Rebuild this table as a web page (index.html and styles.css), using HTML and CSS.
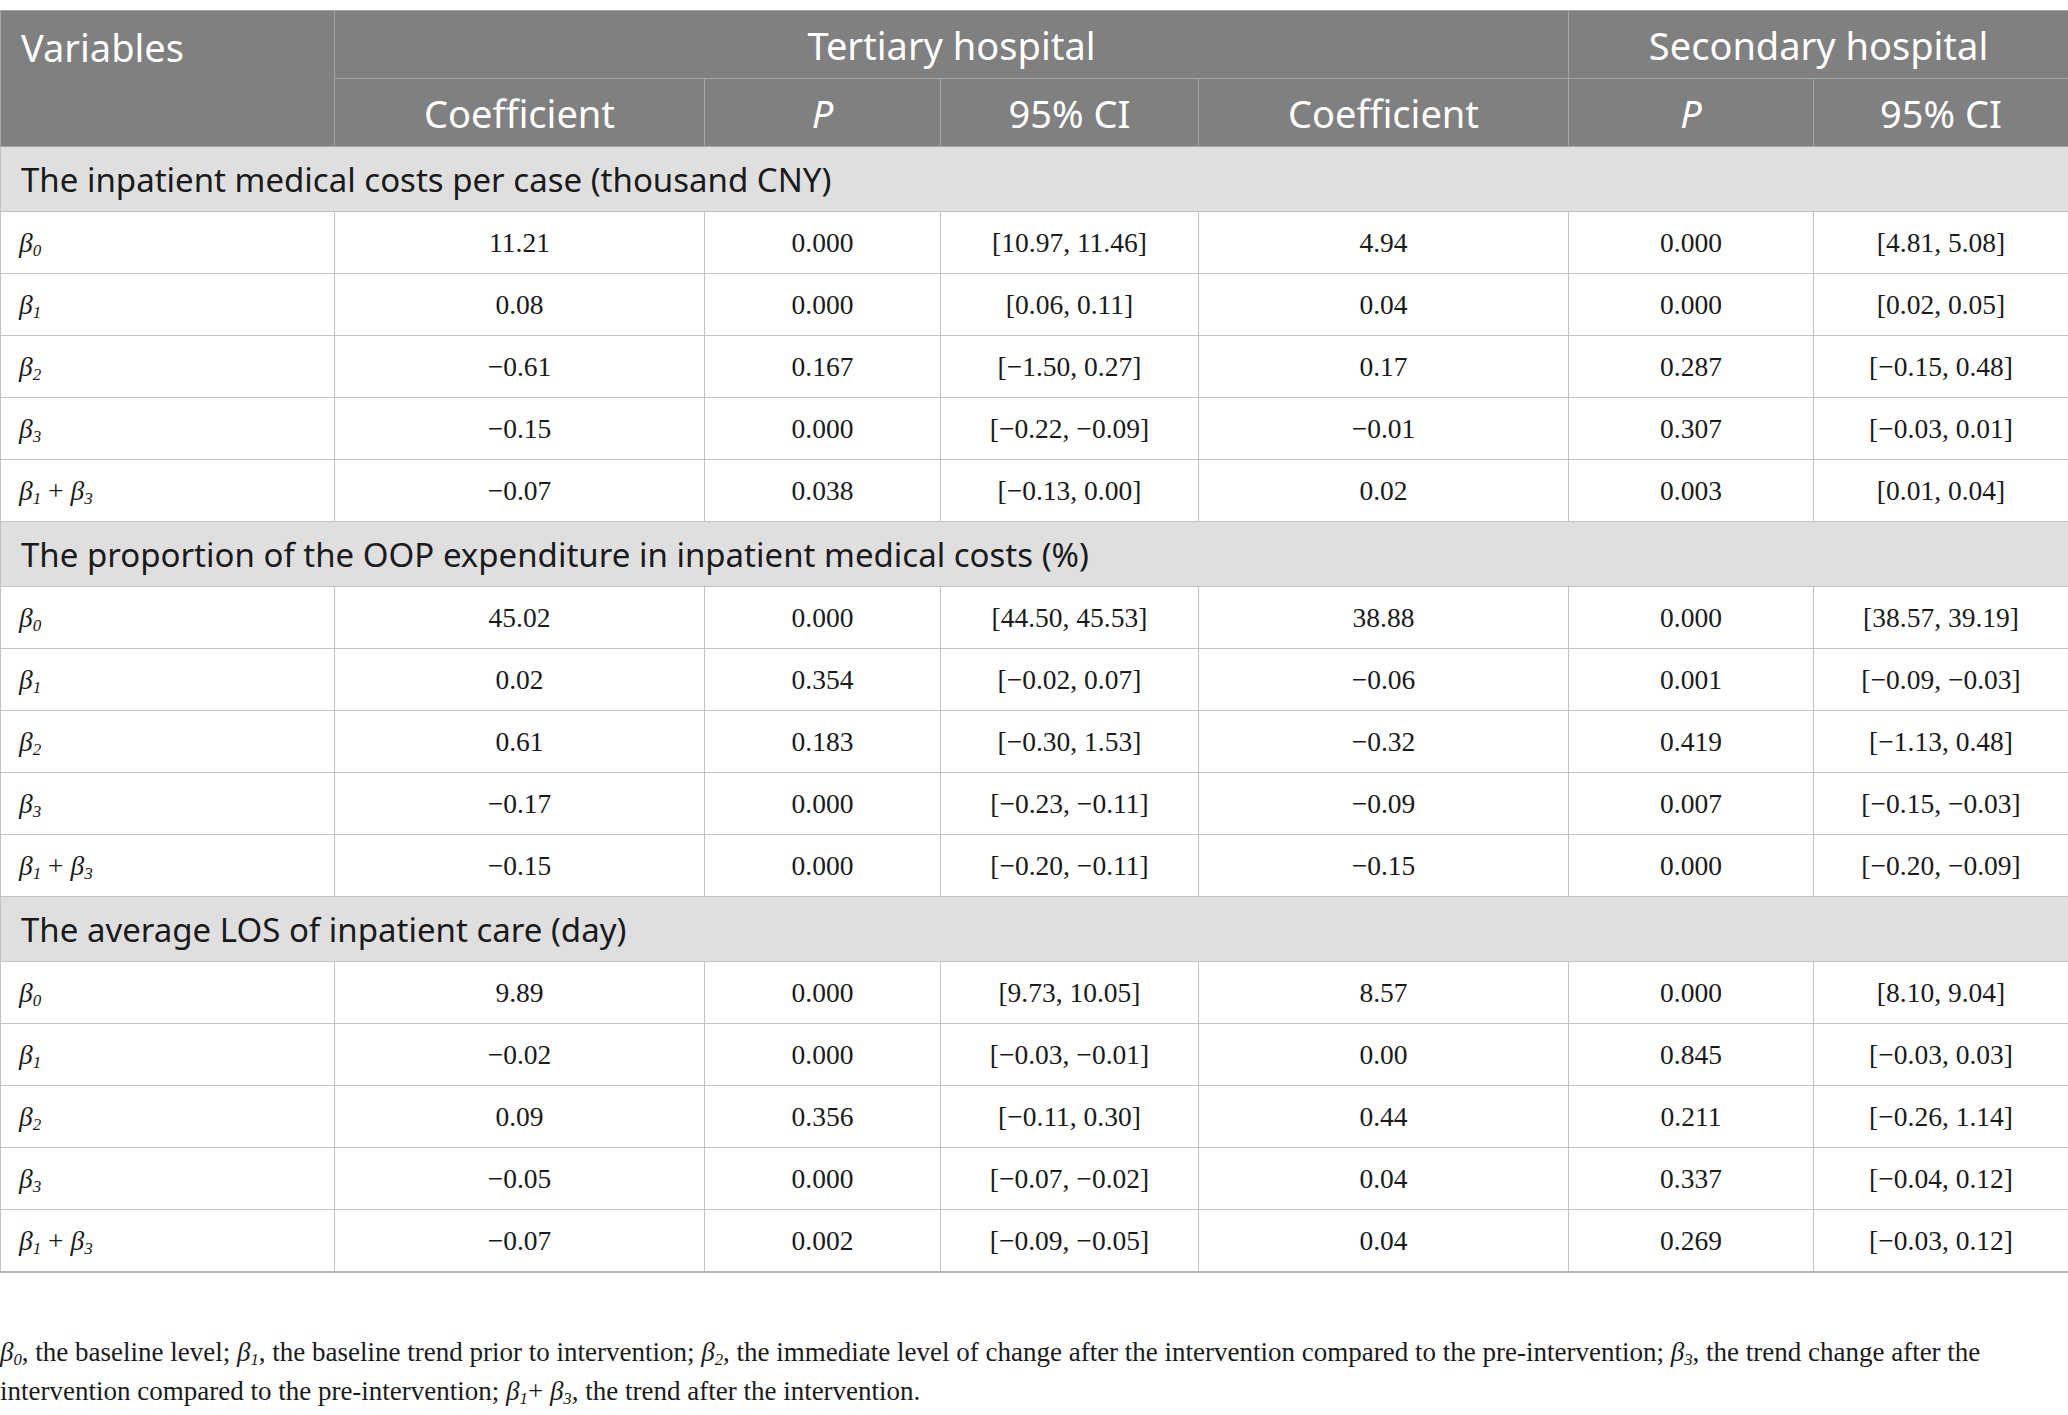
FILE: index.html
```html
<!DOCTYPE html>
<html lang="en">
<head>
<meta charset="utf-8">
<title>Table</title>
<link rel="stylesheet" href="styles.css">
</head>
<body>
<table class="tbl">
  <colgroup>
    <col class="c1"><col class="c2"><col class="c3"><col class="c4"><col class="c5"><col class="c6"><col class="c7">
  </colgroup>
  <thead>
    <tr class="h1">
      <th rowspan="2" class="var">Variables</th>
      <th colspan="4">Tertiary hospital</th>
      <th colspan="2">Secondary hospital</th>
    </tr>
    <tr class="h2">
      <th>Coefficient</th><th><i>P</i></th><th>95% CI</th>
      <th>Coefficient</th><th><i>P</i></th><th>95% CI</th>
    </tr>
  </thead>
  <tbody>
    <tr class="sec"><td colspan="7">The inpatient medical costs per case (thousand CNY)</td></tr>
    <tr><td class="lab"><i>β<sub>0</sub></i></td><td>11.21</td><td>0.000</td><td>[10.97, 11.46]</td><td>4.94</td><td>0.000</td><td>[4.81, 5.08]</td></tr>
    <tr><td class="lab"><i>β<sub>1</sub></i></td><td>0.08</td><td>0.000</td><td>[0.06, 0.11]</td><td>0.04</td><td>0.000</td><td>[0.02, 0.05]</td></tr>
    <tr><td class="lab"><i>β<sub>2</sub></i></td><td>−0.61</td><td>0.167</td><td>[−1.50, 0.27]</td><td>0.17</td><td>0.287</td><td>[−0.15, 0.48]</td></tr>
    <tr><td class="lab"><i>β<sub>3</sub></i></td><td>−0.15</td><td>0.000</td><td>[−0.22, −0.09]</td><td>−0.01</td><td>0.307</td><td>[−0.03, 0.01]</td></tr>
    <tr><td class="lab"><i>β<sub>1</sub></i> + <i>β<sub>3</sub></i></td><td>−0.07</td><td>0.038</td><td>[−0.13, 0.00]</td><td>0.02</td><td>0.003</td><td>[0.01, 0.04]</td></tr>
    <tr class="sec"><td colspan="7">The proportion of the OOP expenditure in inpatient medical costs (%)</td></tr>
    <tr><td class="lab"><i>β<sub>0</sub></i></td><td>45.02</td><td>0.000</td><td>[44.50, 45.53]</td><td>38.88</td><td>0.000</td><td>[38.57, 39.19]</td></tr>
    <tr><td class="lab"><i>β<sub>1</sub></i></td><td>0.02</td><td>0.354</td><td>[−0.02, 0.07]</td><td>−0.06</td><td>0.001</td><td>[−0.09, −0.03]</td></tr>
    <tr><td class="lab"><i>β<sub>2</sub></i></td><td>0.61</td><td>0.183</td><td>[−0.30, 1.53]</td><td>−0.32</td><td>0.419</td><td>[−1.13, 0.48]</td></tr>
    <tr><td class="lab"><i>β<sub>3</sub></i></td><td>−0.17</td><td>0.000</td><td>[−0.23, −0.11]</td><td>−0.09</td><td>0.007</td><td>[−0.15, −0.03]</td></tr>
    <tr><td class="lab"><i>β<sub>1</sub></i> + <i>β<sub>3</sub></i></td><td>−0.15</td><td>0.000</td><td>[−0.20, −0.11]</td><td>−0.15</td><td>0.000</td><td>[−0.20, −0.09]</td></tr>
    <tr class="sec"><td colspan="7">The average LOS of inpatient care (day)</td></tr>
    <tr><td class="lab"><i>β<sub>0</sub></i></td><td>9.89</td><td>0.000</td><td>[9.73, 10.05]</td><td>8.57</td><td>0.000</td><td>[8.10, 9.04]</td></tr>
    <tr><td class="lab"><i>β<sub>1</sub></i></td><td>−0.02</td><td>0.000</td><td>[−0.03, −0.01]</td><td>0.00</td><td>0.845</td><td>[−0.03, 0.03]</td></tr>
    <tr><td class="lab"><i>β<sub>2</sub></i></td><td>0.09</td><td>0.356</td><td>[−0.11, 0.30]</td><td>0.44</td><td>0.211</td><td>[−0.26, 1.14]</td></tr>
    <tr><td class="lab"><i>β<sub>3</sub></i></td><td>−0.05</td><td>0.000</td><td>[−0.07, −0.02]</td><td>0.04</td><td>0.337</td><td>[−0.04, 0.12]</td></tr>
    <tr class="last"><td class="lab"><i>β<sub>1</sub></i> + <i>β<sub>3</sub></i></td><td>−0.07</td><td>0.002</td><td>[−0.09, −0.05]</td><td>0.04</td><td>0.269</td><td>[−0.03, 0.12]</td></tr>
  </tbody>
</table>
<p class="note"><i>β<sub>0</sub></i>, the baseline level; <i>β<sub>1</sub></i>, the baseline trend prior to intervention; <i>β<sub>2</sub></i>, the immediate level of change after the intervention compared to the pre-intervention; <i>β<sub>3</sub></i>, the trend change after the intervention compared to the pre-intervention; <i>β<sub>1</sub></i>+ <i>β<sub>3</sub></i>, the trend after the intervention.</p>
</body>
</html>
```

FILE: styles.css
```css
html, body {
  margin: 0;
  padding: 0;
  background: #ffffff;
}
body {
  padding-top: 10px;
}
.tbl {
  width: 2068px;
  border-collapse: collapse;
  table-layout: fixed;
}
.c1 { width: 334px; }
.c2 { width: 370px; }
.c3 { width: 236px; }
.c4 { width: 258px; }
.c5 { width: 370px; }
.c6 { width: 245px; }
.c7 { width: 255px; }

.tbl th {
  background: #7f807f;
  color: #ffffff;
  font-family: "Noto Sans", "Open Sans", sans-serif;
  font-weight: 400;
  font-size: 38px;
  text-align: center;
  border: 1px solid #a3a4a3;
  padding: 0 20px;
  height: 68px;
  box-sizing: border-box;
}
.tbl th.var {
  text-align: left;
  vertical-align: top;
  padding-top: 10px;
}
.tbl th i { font-style: italic; }

.tbl td {
  font-family: "Liberation Serif", "Times New Roman", serif;
  font-size: 27.5px;
  color: #1a1a1a;
  text-align: center;
  border: 1px solid #c3c3c3;
  height: 61px;
  padding: 0 18px;
}
.tbl td.lab {
  text-align: left;
}
.tbl td sub, .note sub {
  font-size: 0.62em;
  vertical-align: -0.25em;
  line-height: 0;
}
.tbl tr.sec td {
  background: #e0dfe0;
  font-family: "Noto Sans", "Open Sans", sans-serif;
  font-size: 33px;
  color: #1a1a1a;
  text-align: left;
  height: 64px;
  padding: 0 20px;
}
.tbl tr.last td {
  border-bottom: 2px solid #b5b5b5;
}
.note {
  margin: 60px 0 0 0;
  font-family: "Liberation Serif", "Times New Roman", serif;
  font-size: 27px;
  line-height: 39px;
  color: #1a1a1a;
}
```
